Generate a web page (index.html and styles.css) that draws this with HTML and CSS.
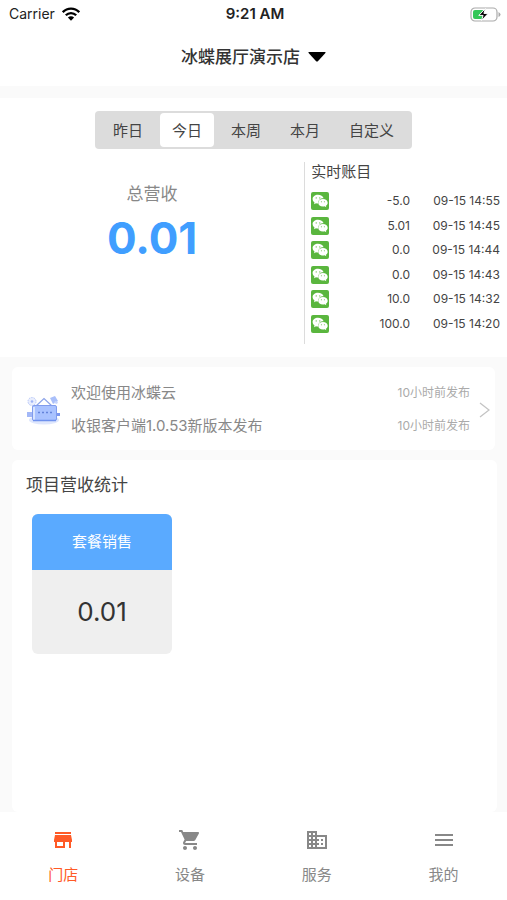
FILE: index.html
```html
<!DOCTYPE html>
<html lang="zh-CN">
<head>
<meta charset="utf-8">
<meta name="viewport" content="width=device-width, initial-scale=1">
<title>冰蝶展厅演示店</title>
<link rel="stylesheet" href="styles.css">
</head>
<body>
<svg class="defs" aria-hidden="true">
  <symbol id="wechat" viewBox="0 0 18 18">
    <rect width="18" height="18" rx="2" fill="#5ab63e"/>
    <path d="M7 2.800C4 2.800 1.600 4.700 1.600 7.100c0 1.400.8 2.600 1.900 3.400l-.5 1.700 2-1c.6.2 1.300.3 2 .3C6.900 8.200 9.500 6.200 12.600 6.300 12 4.300 9.700 2.800 7 2.800z" fill="#fff"/>
    <path d="M11.900 6.900c-2.700 0-4.700 1.700-4.700 3.800s2 3.800 4.700 3.800c.6 0 1.200-.1 1.700-.2l1.700.9-.4-1.500c1.100-.7 1.800-1.800 1.800-3 0-2.100-2.100-3.800-4.800-3.800z" fill="#fff"/>
    <g fill="#5ab63e"><circle cx="5.200" cy="5.900" r=".6"/><circle cx="8.800" cy="5.900" r=".6"/><circle cx="10.400" cy="9.700" r=".5"/><circle cx="13.400" cy="9.700" r=".5"/></g>
  </symbol>
</svg>

<div class="status">
  <div class="carrier">Carrier
    <svg width="18" height="14" viewBox="0 0 18 14" aria-hidden="true"><g fill="none" stroke="#000" stroke-width="2.300"><path d="M.8 5.200C5.300.4 12.700.4 17.200 5.200"/><path d="M3.800 8.300c2.900-3 7.500-3 10.400 0"/></g><path d="M9 13.700 5.900 10.400c1.700-1.700 4.500-1.700 6.200 0z"/></svg>
  </div>
  <div class="clock">9:21 AM</div>
  <div class="battery">
    <svg width="31" height="15" viewBox="0 0 31 15" aria-hidden="true"><rect x="1" y="1" width="26" height="13" rx="4" fill="#fff" stroke="#aaa" stroke-width="1.200"/><path d="M28.500 5v5q2-1 2-2.500T28.500 5z" fill="#aaa"/><rect x="3" y="3" width="11" height="9" rx="2" fill="#35c759"/><path d="M15.500 1.500 8.800 8.400h4.300l-1.600 5.100 6.700-7.100h-4.300z" fill="#000" stroke="#fff" stroke-width="1"/></svg>
  </div>
</div>

<header class="title">
  <button class="shop" type="button">冰蝶展厅演示店
    <svg width="18" height="10" viewBox="0 0 18 10" aria-hidden="true"><path d="M.8 0h16.400q.8.300.2 1l-7.300 8q-1.100 1-2.200 0L.6 1Q0 .3.800 0z"/></svg>
  </button>
</header>

<main>
  <section class="overview">
    <div class="periods">
      <button type="button">昨日</button>
      <button type="button" class="active">今日</button>
      <button type="button">本周</button>
      <button type="button">本月</button>
      <button type="button">自定义</button>
    </div>
    <div class="figures">
      <div class="total">
        <h2>总营收</h2>
        <strong>0.01</strong>
      </div>
      <div class="ledger">
        <h2>实时账目</h2>
        <table>
          <tbody>
            <tr><td><svg class="pay" role="img" aria-label="微信"><use href="#wechat"/></svg></td><td class="amount">-5.0</td><td class="date">09-15 14:55</td></tr>
            <tr><td><svg class="pay" role="img" aria-label="微信"><use href="#wechat"/></svg></td><td class="amount">5.01</td><td class="date">09-15 14:45</td></tr>
            <tr><td><svg class="pay" role="img" aria-label="微信"><use href="#wechat"/></svg></td><td class="amount">0.0</td><td class="date">09-15 14:44</td></tr>
            <tr><td><svg class="pay" role="img" aria-label="微信"><use href="#wechat"/></svg></td><td class="amount">0.0</td><td class="date">09-15 14:43</td></tr>
            <tr><td><svg class="pay" role="img" aria-label="微信"><use href="#wechat"/></svg></td><td class="amount">10.0</td><td class="date">09-15 14:32</td></tr>
            <tr><td><svg class="pay" role="img" aria-label="微信"><use href="#wechat"/></svg></td><td class="amount">100.0</td><td class="date">09-15 14:20</td></tr>
          </tbody>
        </table>
      </div>
    </div>
  </section>

  <a class="notice" href="#notices">
    <svg width="36" height="30" viewBox="0 0 36 30" aria-hidden="true">
      <ellipse cx="18" cy="25" rx="15" ry="4.500" fill="#dfe7fd"/>
      <circle cx="6" cy="6.500" r="4" fill="#e9eefe" stroke="#b5c5f8" stroke-dasharray="1.500 1"/><circle cx="6" cy="6.500" r="1.300" fill="#9fb4f5"/>
      <path d="m24 3 5-2 3 5-5 3z" fill="#a9bffa"/><path d="m29 6 3 1-1 2-3-1z" fill="#c7d5fc"/>
      <path d="M1 17h6v5H1z" fill="#a3b8f7"/><path d="M30 18h4v3h-4z" fill="#7d98ee"/>
      <path d="m10 11 8-7.500L26 11" fill="none" stroke="#8ba3e8" stroke-width="1.200"/>
      <rect x="6.500" y="10.500" width="24" height="15" rx="1.500" fill="#a9c2ff" stroke="#819cec"/>
      <path d="M8 25V12" stroke="#e8efff" stroke-width="1.500"/><path d="M7 25.500h23" stroke="#6f91ed" stroke-width="1.500"/>
      <path d="M12 17.500h14" stroke="#6483da" stroke-width="1.500" stroke-dasharray="2 2"/>
    </svg>
    <ul>
      <li><span>欢迎使用冰蝶云</span><time>10小时前发布</time></li>
      <li><span>收银客户端1.0.53新版本发布</span><time>10小时前发布</time></li>
    </ul>
    <svg width="11" height="16" viewBox="0 0 11 16" aria-hidden="true"><path d="m1 1 9 7-9 7" fill="none" stroke="#c4c4c4" stroke-width="1.300"/></svg>
  </a>

  <section class="stats">
    <h2>项目营收统计</h2>
    <div class="tiles">
      <article class="tile">
        <h3>套餐销售</h3>
        <p>0.01</p>
      </article>
    </div>
  </section>
</main>

<nav class="tabs">
  <a class="current" href="#shop"><svg viewBox="0 0 24 24" aria-hidden="true"><path d="M20 4H4v2h16V4zm1 10v-2l-1-5H4l-1 5v2h1v6h10v-6h4v6h2v-6h1zm-9 4H6v-4h6v4z"/></svg>门店</a>
  <a href="#devices"><svg viewBox="0 0 24 24" aria-hidden="true"><path d="M7 18c-1.100 0-1.990.9-1.990 2S5.900 22 7 22s2-.9 2-2-.9-2-2-2zM1 2v2h2l3.600 7.590-1.350 2.450c-.16.28-.25.61-.25.960 0 1.100.9 2 2 2h12v-2H7.420c-.14 0-.25-.11-.25-.25l.03-.12.900-1.630h7.450c.75 0 1.410-.41 1.750-1.030l3.580-6.490c.08-.14.120-.31.120-.48 0-.55-.45-1-1-1H5.210l-.94-2H1zm16 16c-1.100 0-1.990.9-1.990 2s.89 2 1.990 2 2-.9 2-2-.9-2-2-2z"/></svg>设备</a>
  <a href="#services"><svg viewBox="0 0 24 24" aria-hidden="true"><path d="M12 7V3H2v18h20V7H12zM6 19H4v-2h2v2zm0-4H4v-2h2v2zm0-4H4V9h2v2zm0-4H4V5h2v2zm4 12H8v-2h2v2zm0-4H8v-2h2v2zm0-4H8V9h2v2zm0-4H8V5h2v2zm10 12h-8v-2h2v-2h-2v-2h2v-2h-2V9h8v10zm-2-8h-2v2h2v-2zm0 4h-2v2h2v-2z"/></svg>服务</a>
  <a href="#mine"><svg viewBox="0 0 24 24" aria-hidden="true"><path d="M3 18h18v-2H3v2zm0-5h18v-2H3v2zm0-7v2h18V6H3z"/></svg>我的</a>
</nav>
</body>
</html>
```
FILE: styles.css
```css
* { box-sizing: border-box; }

body {
  margin: 0;
  min-height: 100vh;
  display: flex;
  flex-direction: column;
  background: #fafafa;
  color: #444;
  font-family: Inter, "Noto Sans CJK SC", sans-serif;
  font-size: 15px;
  line-height: 20px;
}

h2, h3, p, ul { margin: 0; padding: 0; font-weight: 400; }
h2, h3 { font-size: inherit; }
ul { list-style: none; }
a { color: inherit; text-decoration: none; }
button {
  border: 0;
  padding: 0;
  background: none;
  color: inherit;
  font: inherit;
}
svg { display: block; flex: none; }
.defs { position: absolute; width: 0; height: 0; }

.status {
  display: grid;
  grid-template-columns: 1fr auto 1fr;
  align-items: center;
  height: 28px;
  padding: 0 6px 0 9px;
  background: #fff;
  color: #222;
  font-size: 14px;
}
.carrier { display: flex; align-items: center; gap: 7px; }
.clock { font-size: 15px; font-weight: 600; }
.battery { justify-self: end; }

.title {
  display: flex;
  justify-content: center;
  height: 58px;
  background: #fff;
}
.shop {
  display: flex;
  align-items: center;
  gap: 8px;
  color: #333;
  font-size: 17px;
  font-weight: 500;
}

main { flex: 1; display: flex; flex-direction: column; }

.overview {
  display: flex;
  flex-direction: column;
  align-items: center;
  margin-top: 12px;
  padding: 13px 0 13px;
  background: #fff;
}
.periods {
  display: flex;
  gap: 5px;
  padding: 2px 6px;
  border-radius: 4px;
  background: #dcdcdc;
}
.periods button { padding: 8px 12px 6px; border-radius: 4px; }
.periods .active { background: #fff; }

.figures {
  align-self: stretch;
  display: grid;
  grid-template-columns: 3fr 2fr;
  margin-top: 13px;
}
.total { padding-top: 20px; text-align: center; color: #888; }
.total h2 { font-size: 17px; line-height: 24px; }
.total strong {
  display: block;
  color: #409eff;
  font-size: 44px;
  line-height: 64px;
}
.ledger {
  padding: 0 7px 8px 6px;
  border-left: 1px solid #dcdcdc;
}
table { width: 100%; height: 147px; margin-top: 7px; border-collapse: collapse; }
td { padding: 0; font-size: 12px; line-height: 18px; }
.pay { width: 18px; height: 18px; }
.amount, .date { text-align: right; }
.date { width: 90px; }

.notice {
  display: flex;
  align-items: center;
  gap: 9px;
  margin: 10px 12px 0;
  padding: 16px 5px 14px 14px;
  border-radius: 6px;
  background: #fff;
  color: #888;
}
.notice ul { flex: 1; display: grid; gap: 13px; }
.notice li { display: flex; justify-content: space-between; align-items: center; }
time { color: #aaa; font-size: 12px; }

.stats {
  flex: 1;
  margin: 10px 10px 0 12px;
  padding: 15px 14px;
  border-radius: 6px;
  background: #fff;
}
.stats h2 { font-size: 17px; }
.tiles { display: flex; flex-wrap: wrap; gap: 12px; padding: 19px 6px; }
.tile { width: 140px; border-radius: 6px; overflow: hidden; background: #efefef; text-align: center; }
.tile h3 { background: #5aaaff; color: #fff; line-height: 56px; }
.tile p { color: #333; font-size: 26px; line-height: 84px; }

.tabs { display: flex; height: 88px; background: #fff; color: #888; }
.tabs a {
  flex: 1;
  display: flex;
  flex-direction: column;
  align-items: center;
  gap: 13px;
  padding-top: 16px;
}
.tabs svg { width: 24px; height: 24px; fill: currentColor; }
.tabs .current { color: #ff5a26; }
```
